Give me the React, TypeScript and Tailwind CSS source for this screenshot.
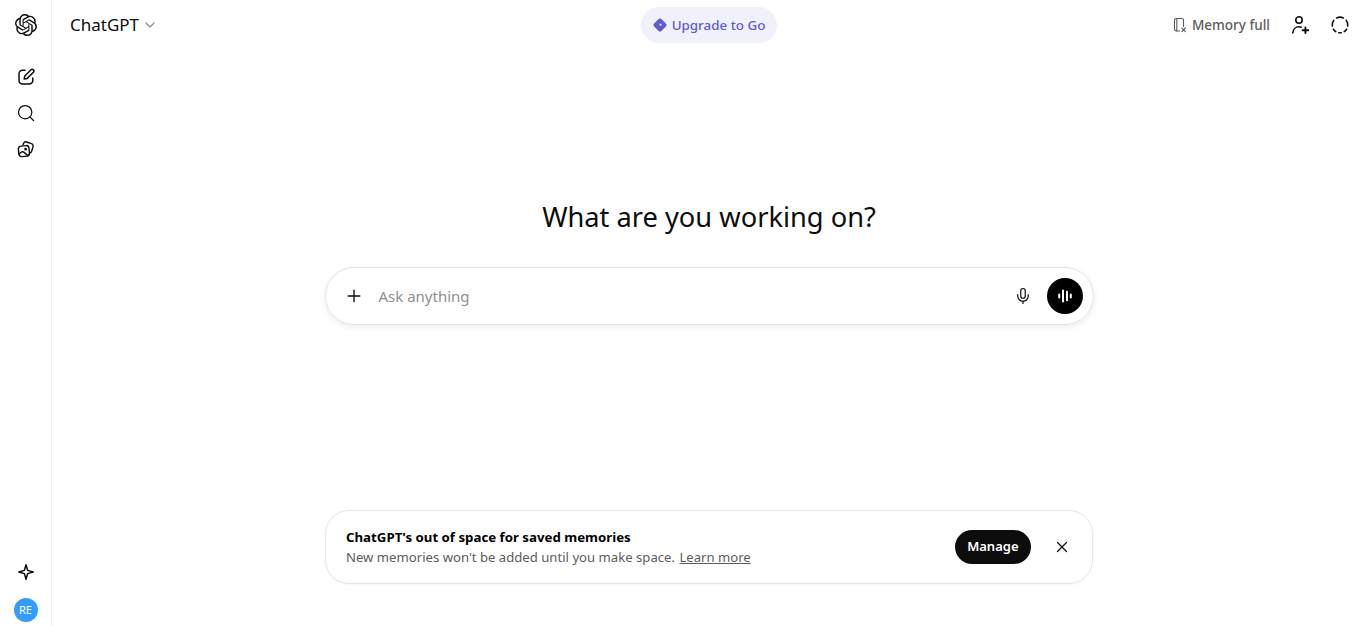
import { Mic, Plus, Search, X, ChevronDown } from 'lucide-react';
import { SiOpenai } from 'react-icons/si';

function EditIcon() {
  return (
    <svg width="18" height="18" viewBox="0 0 18 18" fill="none" stroke="currentColor" strokeWidth="1.5" strokeLinecap="round" strokeLinejoin="round">
      <path d="M8 2.2H5.5A3.5 3.5 0 0 0 2 5.7v6.8A3.5 3.5 0 0 0 5.5 16h6.8a3.5 3.5 0 0 0 3.5-3.5V10" />
      <path d="M14 1.8a1.7 1.7 0 0 1 2.4 2.4L10.2 10.4 7.2 11l.6-3z" />
    </svg>
  );
}

function ImagesIcon() {
  return (
    <svg width="18" height="18" viewBox="0 0 18 18" fill="none" stroke="currentColor" strokeWidth="1.4" strokeLinecap="round" strokeLinejoin="round">
      <path d="M6 4.6 6.6 3.4A2.4 2.4 0 0 1 9.6 2l4.8 1.6A2.4 2.4 0 0 1 16 6.6l-1.4 4.8a2.4 2.4 0 0 1-1.9 1.7" />
      <rect x="1.6" y="5.8" width="10.6" height="10.6" rx="2.8" transform="rotate(-6 7 11)" />
      <circle cx="8.6" cy="9.2" r="0.7" fill="currentColor" />
      <path d="M2.2 14.2c1.6-2.6 3.4-3.2 5.2-1.6l3.6 3" />
    </svg>
  );
}

function SparkIcon() {
  return (
    <svg width="18" height="18" viewBox="0 0 18 18" fill="none" stroke="currentColor" strokeWidth="1.5" strokeLinejoin="round">
      <path d="M9 1.8 10.6 7.4 16.2 9 10.6 10.6 9 16.2 7.4 10.6 1.8 9 7.4 7.4Z" />
    </svg>
  );
}

function UpgradeIcon() {
  return (
    <svg width="14" height="14" viewBox="0 0 14 14">
      <path fillRule="evenodd" fill="currentColor" d="M5.6 1.1a2 2 0 0 1 2.8 0l4.5 4.5a2 2 0 0 1 0 2.8l-4.5 4.5a2 2 0 0 1-2.8 0L1.1 8.4a2 2 0 0 1 0-2.8ZM8.4 5.7H6.6v1.8h1.8Z" />
    </svg>
  );
}

function MemoryIcon() {
  return (
    <svg width="14" height="16" viewBox="0 0 14 16" fill="none" stroke="currentColor" strokeWidth="1.1" strokeLinecap="round" strokeLinejoin="round">
      <path d="M6.5 14H3.2A1.7 1.7 0 0 1 1.5 12.3V3.2A1.7 1.7 0 0 1 3.2 1.5h5.6a1.7 1.7 0 0 1 1.7 1.7V9.5" />
      <path d="M3.8 1.7V14" />
      <path d="M8.8 11 12.4 14.6M12.4 11 8.8 14.6" />
    </svg>
  );
}

function PersonPlusIcon() {
  return (
    <svg width="20" height="20" viewBox="0 0 20 20" fill="none" stroke="currentColor" strokeWidth="1.6" strokeLinecap="round" strokeLinejoin="round">
      <circle cx="9" cy="5" r="3.2" />
      <path d="M2.8 18c.2-3.8 2.8-6.2 6.2-6.2 .8 0 1.6.1 2.2.4" />
      <path d="M15.4 12.4v5.6M12.6 15.2h5.6" strokeWidth="1.9" />
    </svg>
  );
}

function DashedCircleIcon() {
  return (
    <svg width="20" height="20" viewBox="0 0 20 20" fill="none" stroke="currentColor" strokeWidth="1.6" strokeLinecap="round">
      <path d="M6.6 3A7.8 7.8 0 0 1 13.4 3" />
      <path d="M16.3 5.4a7.8 7.8 0 0 1 1.4 5.8" />
      <path d="M16.6 14.2a7.8 7.8 0 0 1-2.4 2.4" />
      <path d="M11.2 17.7a7.8 7.8 0 0 1-2.4 0" />
      <path d="M5.8 16.6a7.8 7.8 0 0 1-2.4-2.4" />
      <path d="M2.3 11.2a7.8 7.8 0 0 1 1.4-5.8" />
    </svg>
  );
}

function WaveIcon() {
  return (
    <svg width="20" height="20" viewBox="0 0 20 20" fill="none" stroke="white" strokeWidth="2" strokeLinecap="round">
      <path d="M4.2 8.6v2.8M8 4.5v11M12 5.8v8.4M15.8 8.6v2.8" />
    </svg>
  );
}

export default function App() {
  return (
    <div className="flex h-[626px] w-[1353px] overflow-hidden bg-white text-[#0d0d0d] font-['Noto_Sans','Open_Sans',sans-serif]">
      {/* rail */}
      <aside className="flex w-[52px] shrink-0 flex-col items-center border-r border-[#ededed] pt-[14px] pb-[4px]">
        <SiOpenai size={22} />
        <div className="mt-[32px] flex flex-col items-center gap-[17px]">
          <EditIcon />
          <Search size={20} strokeWidth={1.5} />
          <ImagesIcon />
        </div>
        <div className="mt-auto flex flex-col items-center gap-[17px]">
          <SparkIcon />
          <div className="flex h-6 w-6 items-center justify-center rounded-full bg-[#339cff] text-[11px] text-white">RE</div>
        </div>
      </aside>

      {/* main */}
      <main className="flex min-w-0 flex-1 flex-col pl-[13px]">
        <header className="grid h-[50px] shrink-0 grid-cols-[1fr_auto_1fr] items-center">
          <div className="ml-[5px] flex items-center gap-[3px] text-[17px]">
            <span>ChatGPT</span>
            <ChevronDown size={16} className="text-[#8f8f8f]" />
          </div>
          <div className="flex h-9 items-center gap-[5px] rounded-full bg-[#f1f1fb] px-[12px] text-[13.4px] font-medium text-[#5d5bd0]">
            <UpgradeIcon />
            <span>Upgrade to Go</span>
          </div>
          <div className="flex items-center justify-end pr-[3px]">
            <div className="flex items-center gap-[5px] text-[13.5px] font-medium text-[#5d5d5d]">
              <MemoryIcon />
              <span>Memory full</span>
            </div>
            <span className="ml-[20px]"><PersonPlusIcon /></span>
            <span className="ml-[20px]"><DashedCircleIcon /></span>
          </div>
        </header>

        <h1 className="mt-[146px] text-center text-[27.25px] leading-[42px] font-normal">What are you working on?</h1>

        <div className="mx-auto mt-[29px] flex h-[58px] w-[769px] items-center rounded-[29px] border border-[#e3e3e3] pr-[10px] pl-[18px] shadow-[0_2px_6px_rgba(0,0,0,0.08)]">
          <Plus size={20} strokeWidth={1.6} />
          <span className="ml-[15px] text-[15px] text-[#8f8f8f]">Ask anything</span>
          <Mic size={18} strokeWidth={1.6} className="mr-[15px] ml-auto" />
          <div className="flex h-9 w-9 items-center justify-center rounded-full bg-black">
            <WaveIcon />
          </div>
        </div>

        <div className="mx-auto mt-[185px] flex h-[74px] w-[768px] items-center rounded-[24px] border border-[#e5e5e5] pr-[21px] pl-[20px] shadow-[0_1px_3px_rgba(0,0,0,0.04)]">
          <div className="flex flex-col">
            <span className="text-[13.25px] leading-[20px] font-bold text-black">ChatGPT's out of space for saved memories</span>
            <span className="text-[13.14px] leading-[20px] text-[#5d5d5d]">
              New memories won't be added until you make space. <span className="ml-[1px] underline">Learn more</span>
            </span>
          </div>
          <div className="ml-auto flex h-[34px] items-center rounded-full bg-[#0d0d0d] px-[12.5px] text-[13px] font-semibold text-white">Manage</div>
          <X size={18} strokeWidth={1.6} className="ml-[22px]" />
        </div>
      </main>
    </div>
  );
}
